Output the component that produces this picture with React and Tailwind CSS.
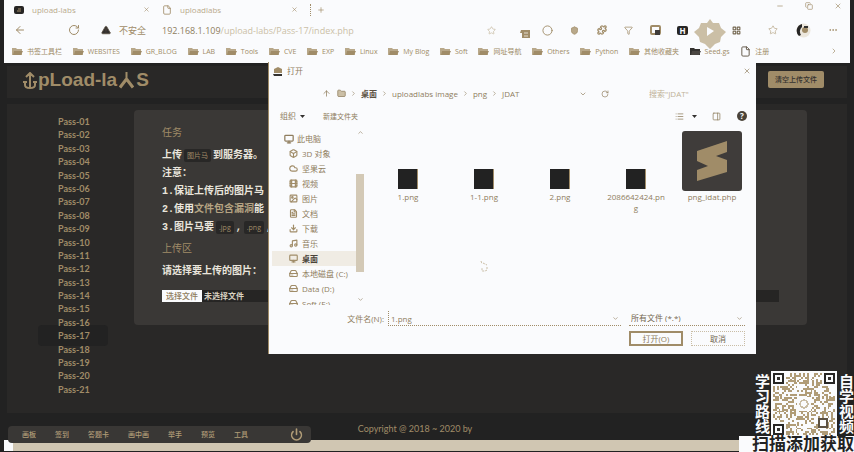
import React from "react";
import {
  ArrowLeft, ArrowUp, RotateCw, TriangleAlert, File, X, Plus, Star, Circle, Shield, Puzzle, Filter,
  LayoutGrid, Ellipsis, ChevronRight, ChevronDown, ChevronUp, Minus, Copy, Power,
  Monitor, Box, Cloud, Film, Image, FileText, Download, Music, HardDrive, List, PanelRight, Folder,
} from "lucide-react";

const zh = "font-['Open_Sans','Noto_Sans_CJK_SC',sans-serif]";

const bookmarks = [
  "书签工具栏", "WEBSITES", "GR_BLOG", "LAB", "Tools", "CVE", "EXP", "Linux", "My Blog", "Soft",
  "网址导航", "Others", "Python", "其他收藏夹",
];

const passes = Array.from({ length: 21 }, (_, i) => "Pass-" + String(i + 1).padStart(2, "0"));

const places = [
  [Box, "3D 对象"], [Cloud, "坚果云"], [Film, "视频"], [Image, "图片"], [FileText, "文档"],
  [Download, "下载"], [Music, "音乐"], [Monitor, "桌面"], [HardDrive, "本地磁盘 (C:)"],
  [HardDrive, "Data (D:)"], [HardDrive, "Soft (E:)"],
];

function FolderIcon({ dark }) {
  return (
    <svg viewBox="0 0 11 9" className={"h-[9px] w-[11px] shrink-0 " + (dark ? "text-[#33312f]" : "text-[#b8a88a]")}>
      <path d="M0 1h4l1 1h5v6H0z" fill="currentColor" />
      <path d="M2 4h9L9 8H1z" fill={dark ? "#4a4642" : "#a08c68"} />
    </svg>
  );
}

function Caret() {
  return (
    <svg viewBox="0 0 5 3" className="h-[3px] w-[5px] fill-[#33312f]">
      <path d="M0 0h5L2.500 3z" />
    </svg>
  );
}

function Tab({ icon, label }) {
  return (
    <div className="flex w-[148px] items-center pr-3">
      {icon}
      <span className="ml-2 flex-1 text-[8px] leading-none text-[#b9aa8c]">{label}</span>
      <button aria-label="关闭标签页"><X size={7} /></button>
    </div>
  );
}

function Browser() {
  return (
    <header className="mx-1 flex h-[63px] flex-col bg-[#fafbfd] pb-[2px] text-[#a08c68]">
      <div className="flex h-[19px] items-center pl-[10px]">
        <Tab
          label="upload-labs"
          icon={
            <svg viewBox="0 0 10 8" className="h-2 w-[10px]">
              <rect width="10" height="8" rx="2" fill="#262524" />
              <path d="M3 5h4M4 3h3" stroke="#a08c68" />
            </svg>
          }
        />
        <Tab label="uploadlabs" icon={<File size={10} strokeWidth={2} />} />
        <span className="h-3 border-l border-dotted border-[#a08c68]" />
        <button aria-label="新建标签页" className="ml-[6px]"><Plus size={8} /></button>
        <div className="mr-2 mb-2 ml-auto flex gap-[21px]">
          <button aria-label="最小化"><Minus size={8} /></button>
          <button aria-label="还原"><Copy size={8} /></button>
          <button aria-label="关闭"><X size={8} /></button>
        </div>
      </div>
      <div className="flex h-[22px] items-center pl-[10px]">
        <button aria-label="后退"><ArrowLeft size={12} strokeWidth={2} /></button>
        <button aria-label="刷新" className="ml-[42px]"><RotateCw size={12} strokeWidth={2} /></button>
        <TriangleAlert size={10} className="ml-[21px] fill-[#33312f] text-[#5c5142]" />
        <span className="ml-2 text-[9px] leading-none">不安全</span>
        <span className="ml-4 flex-1 text-[9px] leading-none text-[#8f7d5e]">
          192.168.1.109<span className="text-[#cbbfa6]">/upload-labs/Pass-17/index.php</span>
        </span>
        <Star size={9} className="mr-[24px] text-[#c9bda5]" />
        <svg viewBox="0 0 10 8" className="mt-2 mr-1 h-2 w-[10px]">
          <path d="M1 0h9v8H2V3H0z" fill="#a08c68" />
          <path d="M4 3h4M4 6h4" stroke="#e4dccd" />
        </svg>
        <div className="flex items-center *:flex *:w-[27px] *:justify-center">
          <span><Circle size={11} strokeWidth={2} /></span>
          <span><Shield size={9} className="fill-[#b8a88a]" /></span>
          <span><Puzzle size={10} strokeWidth={3} /></span>
          <span><Filter size={9} /></span>
          <span>
            <svg viewBox="0 0 11 11" className="h-[11px] w-[11px]">
              <rect x="1" y="1" width="9" height="8" rx="1" fill="none" stroke="#a08c68" strokeWidth="2" />
              <path d="M5 5h5v5H5z" fill="#3f3c3a" />
            </svg>
          </span>
          <span><b className="rounded-xs bg-[#262524] px-[2px] text-[8px] leading-[9px] text-[#fafbfd]">H</b></span>
          <span>
            <svg viewBox="0 0 32 30" className="-mt-1 -mb-3 h-[30px] w-8 shrink-0">
              <path d="M16 0l3 4h6l2 5 5 4-5 5-1 5-5 2-5 5-5-5-5-2-1-5-5-5 5-4 2-5h6z" fill="#cbbfa6" />
              <path d="M13 8l7 4-7 5z" fill="#fafbfd" />
            </svg>
          </span>
          <span><LayoutGrid size={9} strokeWidth={3} className="text-[#746750]" /></span>
        </div>
        <div className="mr-[2px] ml-2 flex items-center *:flex *:w-[30px] *:justify-center">
          <span><Star size={10} className="text-[#c0b297]" /></span>
          <span>
            <svg viewBox="0 0 15 15" className="h-[15px] w-[15px]">
              <circle cx="7.5" cy="7.5" r="7" fill="#ece7dd" />
              <path d="M6 1a7 7 0 0 0-3 12l2-1a6 6 0 0 1 1-8z" fill="#262524" />
              <circle cx="9" cy="7" r="3" fill="#a08c68" />
              <path d="M8 3h4v2H8z" fill="#33312f" />
            </svg>
          </span>
          <span><Ellipsis size={10} /></span>
        </div>
      </div>
      <nav className="flex h-[20px] items-center justify-between pr-3 pl-2 text-[7px] leading-none whitespace-nowrap">
        {bookmarks.map((b) => (
          <a key={b} href="#" className="flex items-center gap-1"><FolderIcon />{b}</a>
        ))}
        <a href="#" className="flex items-center gap-1"><FolderIcon dark />Seed.gs</a>
        <a href="#" className="flex items-center gap-1"><File size={11} className="text-[#5c5142]" />注册</a>
        <button aria-label="更多书签" className="ml-[50px]"><ChevronRight size={8} /></button>
      </nav>
    </header>
  );
}

function Code({ children }) {
  return <code className={"mx-[2px] rounded-xs bg-[#282726] px-[3px] py-[2px] text-[7px] font-normal text-[#a08c68] " + zh}>{children}</code>;
}

function Logo() {
  return (
    <h1 className="-mt-1 flex items-center font-['Liberation_Sans',Arial,sans-serif] text-[19px] leading-6 font-bold text-[#a08c68]">
      <svg viewBox="0 0 14 17" className="mr-px h-[17px] w-[14px] fill-none stroke-current">
        <path d="M7 1v14M3 5l4-4 4 4M2 9v4q0 3 5 3t5-3V9M0 10h4M10 10h4" strokeWidth="2" />
      </svg>
      pLoad-la
      <svg viewBox="0 0 15 17" className="mx-[2px] h-[17px] w-[15px] fill-none stroke-current">
        <path d="M7.500 0v8" strokeWidth="2" />
        <path d="M7.500 7L1 15.500M7.500 7l6.500 8.500" strokeWidth="3" />
      </svg>
      S
    </h1>
  );
}

function Page() {
  return (
    <div className="mx-[7px] flex flex-1 flex-col pt-[3px]">
      <div className="flex h-8 items-center justify-between bg-[#292827] pr-[23px] pl-4">
        <Logo />
        <button className="mb-[6px] h-[17px] rounded-xs bg-[#a08c68] px-[7px] text-[7px] leading-none font-medium text-[#33312f]">清空上传文件</button>
      </div>
      <main className="mt-[6px] flex h-[309px] bg-[#292827] pt-[6px]">
        <ul className="isolate mt-[5px] flex h-[281px] w-[127px] flex-col justify-between pl-[31px] font-[Lato,sans-serif] text-[9px] leading-[13px] text-[#a08c68]">
          {passes.map((p, i) => (
            <li key={p} className="flex w-[70px]">
              <a href="#" className={"-my-1 w-full rounded-sm py-1 pl-5 font-bold " + (i === 16 ? "relative -z-10 bg-[#222222]" : "")}>{p}</a>
            </li>
          ))}
        </ul>
        <section className="mr-10 h-[215px] flex-1 overflow-hidden rounded-sm bg-[#3a3836] pt-[15px] pl-7 font-['Liberation_Mono','Noto_Sans_CJK_SC',monospace] text-[10px] leading-[18px] font-bold whitespace-nowrap text-[#e9e5dc]">
          <h3 className="font-normal text-[#a08c68]">任务</h3>
          <p className="mt-1">上传<Code>图片马</Code>到服务器。</p>
          <p>注意：</p>
          <p>1.保证上传后的图片马</p>
          <p>2.使用<span className="text-[#b5a382]">文件包含漏洞</span>能</p>
          <p>3.图片马要<Code>.jpg</Code>,<Code>.png</Code>,</p>
          <h3 className="mt-1 font-normal text-[#a08c68]">上传区</h3>
          <p className="mt-1">请选择要上传的图片：</p>
          <label className={"mt-[9px] mr-7 flex bg-[#262524] text-[8px] leading-3 " + zh}>
            <input type="file" className="sr-only" />
            <span className="bg-[#fafbfd] px-1 font-medium text-[#8f7d5e]">选择文件</span>
            <span className="pl-[2px] text-[#d9d1c1]">未选择文件</span>
          </label>
        </section>
      </main>
      <footer className="flex h-[27px] items-center justify-center pt-1 font-[Lato,sans-serif] text-[9px] text-[#a08c68]">
        <p className="pr-6">Copyright @ 2018 ~ 2020 by</p>
      </footer>
    </div>
  );
}

function FileItem({ name, php }) {
  return (
    <li className="flex w-[76px] flex-col items-center">
      <div className="flex h-[60px] items-end">
        {php ? (
          <svg viewBox="0 0 60 60" className="h-[60px] w-[60px]">
            <rect width="60" height="60" rx="3" fill="#3f3c3a" />
            <path d="M15 20l30-10v11l-11 4 11 4v12L15 50V39l11-4-11-5z" fill="#a08c68" />
          </svg>
        ) : (
          <span className="mb-[2px] h-5 w-5 border-r border-[#a08c68] bg-[#222222]" />
        )}
      </div>
      <span className="w-[60px] text-center leading-[11px] break-all">{name}</span>
    </li>
  );
}

function OpenDialog() {
  return (
    <div role="dialog" aria-label="打开" className="absolute top-[62px] left-[268px] flex h-[292px] w-[488px] flex-col border-l border-[#a08c68] bg-[#fafbfd] text-[8px] leading-none text-[#8f7d5e]">
      <div className="flex h-[18px] items-center pr-[5px] pl-1">
        <svg viewBox="0 0 10 9" className="h-[9px] w-[10px]">
          <path d="M1 2l4-2 4 2v4H1z" fill="#a08c68" /><path d="M0 7h9v2H1z" fill="#33312f" />
        </svg>
        <span className="ml-1 flex-1">打开</span>
        <button aria-label="关闭"><X size={8} /></button>
      </div>
      <div className="flex h-[27px] items-center pl-[53px]">
        <button aria-label="上移"><ArrowUp size={9} /></button>
        <Folder size={9} className="ml-[6px] fill-[#cbbfa6]" />
        <ChevronRight size={7} className="mx-1" />
        <b className="font-bold text-[#5c5142]">桌面</b>
        <ChevronRight size={7} className="mx-1" />
        <span>uploadlabs image</span>
        <ChevronRight size={7} className="mx-1" />
        <span>png</span>
        <ChevronRight size={7} className="mx-1" />
        <span className="flex-1">JDAT</span>
        <ChevronDown size={8} />
        <button aria-label="刷新" className="ml-[14px]"><RotateCw size={8} /></button>
        <input aria-label="搜索" placeholder={'搜索"JDAT"'} className="ml-10 w-[107px] bg-transparent text-[8px] placeholder:text-[#c0b297]" />
      </div>
      <div className="flex h-[18px] items-center pr-[9px] pl-[11px]">
        <button className="mr-1">组织</button>
        <Caret />
        <button className="ml-[18px] flex-1 text-left text-[7px]">新建文件夹</button>
        <List size={9} className="mr-2" /><Caret />
        <PanelRight size={9} className="ml-[15px]" />
        <button className="ml-4 h-[10px] w-[10px] rounded-full bg-[#4a4339] font-bold text-[#fafbfd]">?</button>
      </div>
      <div className="flex h-[180px] overflow-hidden">
        <ul className="w-[87px] shrink-0 pt-[6px] pl-[3px] whitespace-nowrap">
          <li className="flex h-[15px] items-center gap-[3px] pl-3"><Monitor size={10} strokeWidth={3} />此电脑</li>
          {places.map(([Icon, label], i) => (
            <li key={label} className={"flex h-[15px] items-center gap-1 pl-[17px] " + (i === 7 ? "bg-[#f0ece4] font-bold text-[#4a4339]" : "")}>
              <Icon size={9} strokeWidth={3} className="text-[#a08c68]" />{label}
            </li>
          ))}
        </ul>
        <div className="flex w-2 flex-col items-center pt-1 pb-[2px]">
          <ChevronUp size={7} />
          <span className="mt-[38px] mb-auto h-[98px] w-2 bg-[#d3c9b6]" />
          <ChevronDown size={7} />
        </div>
        <ul className="ml-[6px] flex pt-[6px]">
          <FileItem name="1.png" />
          <FileItem name="1-1.png" />
          <FileItem name="2.png" />
          <FileItem name="2086642424.png" />
          <FileItem name="png_idat.php" php />
        </ul>
      </div>
      <div className="mt-[6px] flex items-center pr-[11px]">
        <label htmlFor="fname" className="w-[119px] pr-1 text-right">文件名(N):</label>
        <div className="flex h-[15px] flex-1 items-center border-b border-l border-dotted border-[#a08c68] pr-[2px] pl-[2px]">
          <input id="fname" defaultValue="1.png" className="min-w-0 flex-1 bg-transparent text-[8px]" />
          <ChevronDown size={7} />
        </div>
        <div className="ml-2 flex h-[15px] w-[116px] items-center border-b border-dotted border-[#a08c68] pr-[2px]">
          <select aria-label="文件类型" className="min-w-0 flex-1 appearance-none bg-transparent pl-[2px] text-[8px] text-[#746750]">
            <option>所有文件 (*.*)</option>
          </select>
          <ChevronDown size={7} />
        </div>
      </div>
      <div className="mt-[5px] flex justify-end gap-2 pr-[11px]">
        <button className="h-[15px] w-[54px] border-2 border-[#a08c68] leading-none">打开(O)</button>
        <button className="h-[15px] w-[54px] border border-dotted border-[#c9bda5] leading-none text-[#746750]">取消</button>
      </div>
      <svg viewBox="0 0 8 12" className="absolute top-[198px] left-[211px] h-3 w-2 fill-none stroke-[#c9bda5]">
        <path d="M1 1l1 3M3 3l4 2M7 7v3l-2 1H2V8" strokeDasharray="2 1" />
      </svg>
    </div>
  );
}

function ClassBar() {
  return (
    <div className="absolute top-[426px] left-2 flex h-[17px] w-[303px] items-center rounded-sm bg-[#393735] pr-2 pl-[14px] text-[7px] leading-none text-[#b09c77]">
      <div className="flex flex-1 justify-between pr-[42px] font-medium">
        {["画板", "签到", "答题卡", "画中画", "举手", "预览", "工具"].map((t) => <button key={t}>{t}</button>)}
      </div>
      <button aria-label="退出"><Power size={13} strokeWidth={3} /></button>
    </div>
  );
}

const N = 33;
function inBox(x, y, bx, by, s) {
  return x >= bx && x < bx + s && y >= by && y < by + s;
}
function modules() {
  let seed = 20201;
  const out = [];
  for (let y = 0; y < N; y++) {
    for (let x = 0; x < N; x++) {
      seed = (seed * 1103515245 + 12345) % 2147483648;
      const reserved = inBox(x, y, 0, 0, 7) || inBox(x, y, N - 7, 0, 7) || inBox(x, y, 0, N - 7, 7)
        || inBox(x, y, 24, 24, 5) || inBox(x, y, 13, 13, 7);
      if (!reserved && seed / 2147483648 < 0.45) out.push([x, y]);
    }
  }
  return out;
}

function Finder({ x, y }) {
  return (
    <g>
      <rect x={x + 0.500} y={y + 0.500} width="5" height="5" fill="none" stroke="#262524" strokeWidth="1" />
      <rect x={x + 2} y={y + 2} width="2" height="2" fill="#33312f" />
    </g>
  );
}

function QrCard() {
  const side = "w-4 text-[15px] leading-4 font-bold whitespace-nowrap text-[#fafbfd] [writing-mode:vertical-rl]";
  return (
    <aside className="absolute right-0 bottom-0 w-[115px]">
      <div className="flex h-[65px] items-center justify-end">
        <span className={side}>学习路线</span>
        <svg viewBox="-1 -1 35 35" shapeRendering="crispEdges" className="mx-px h-[66px] w-[66px] shrink-0 bg-[#fafbfd]">
          {modules().map(([x, y]) => <rect key={x + "-" + y} x={x} y={y} width="1" height="1" fill="#b09c77" />)}
          <Finder x={0} y={0} /><Finder x={27} y={0} /><Finder x={0} y={27} />
          <rect x="24.500" y="24.500" width="4" height="4" fill="#fafbfd" stroke="#5c5142" />
          <circle cx="16.500" cy="16.500" r="2" fill="none" stroke="#c9bda5" />
        </svg>
        <span className={side}>自学视频</span>
      </div>
      <p className="bg-[#fafbfd] text-right text-[17px] leading-4 font-bold whitespace-nowrap text-[#222222]">扫描添加获取</p>
    </aside>
  );
}

export default function App() {
  return (
    <div className={"relative flex h-screen min-h-[452px] w-full flex-col overflow-hidden bg-[#222222] " + zh}>
      <Browser />
      <Page />
      <div className="mx-1 mb-px flex h-[11px] bg-[#d0c6b2]">
        <span className="w-[9px] bg-[#fafbfd]" />
      </div>
      <OpenDialog />
      <ClassBar />
      <QrCard />
    </div>
  );
}
